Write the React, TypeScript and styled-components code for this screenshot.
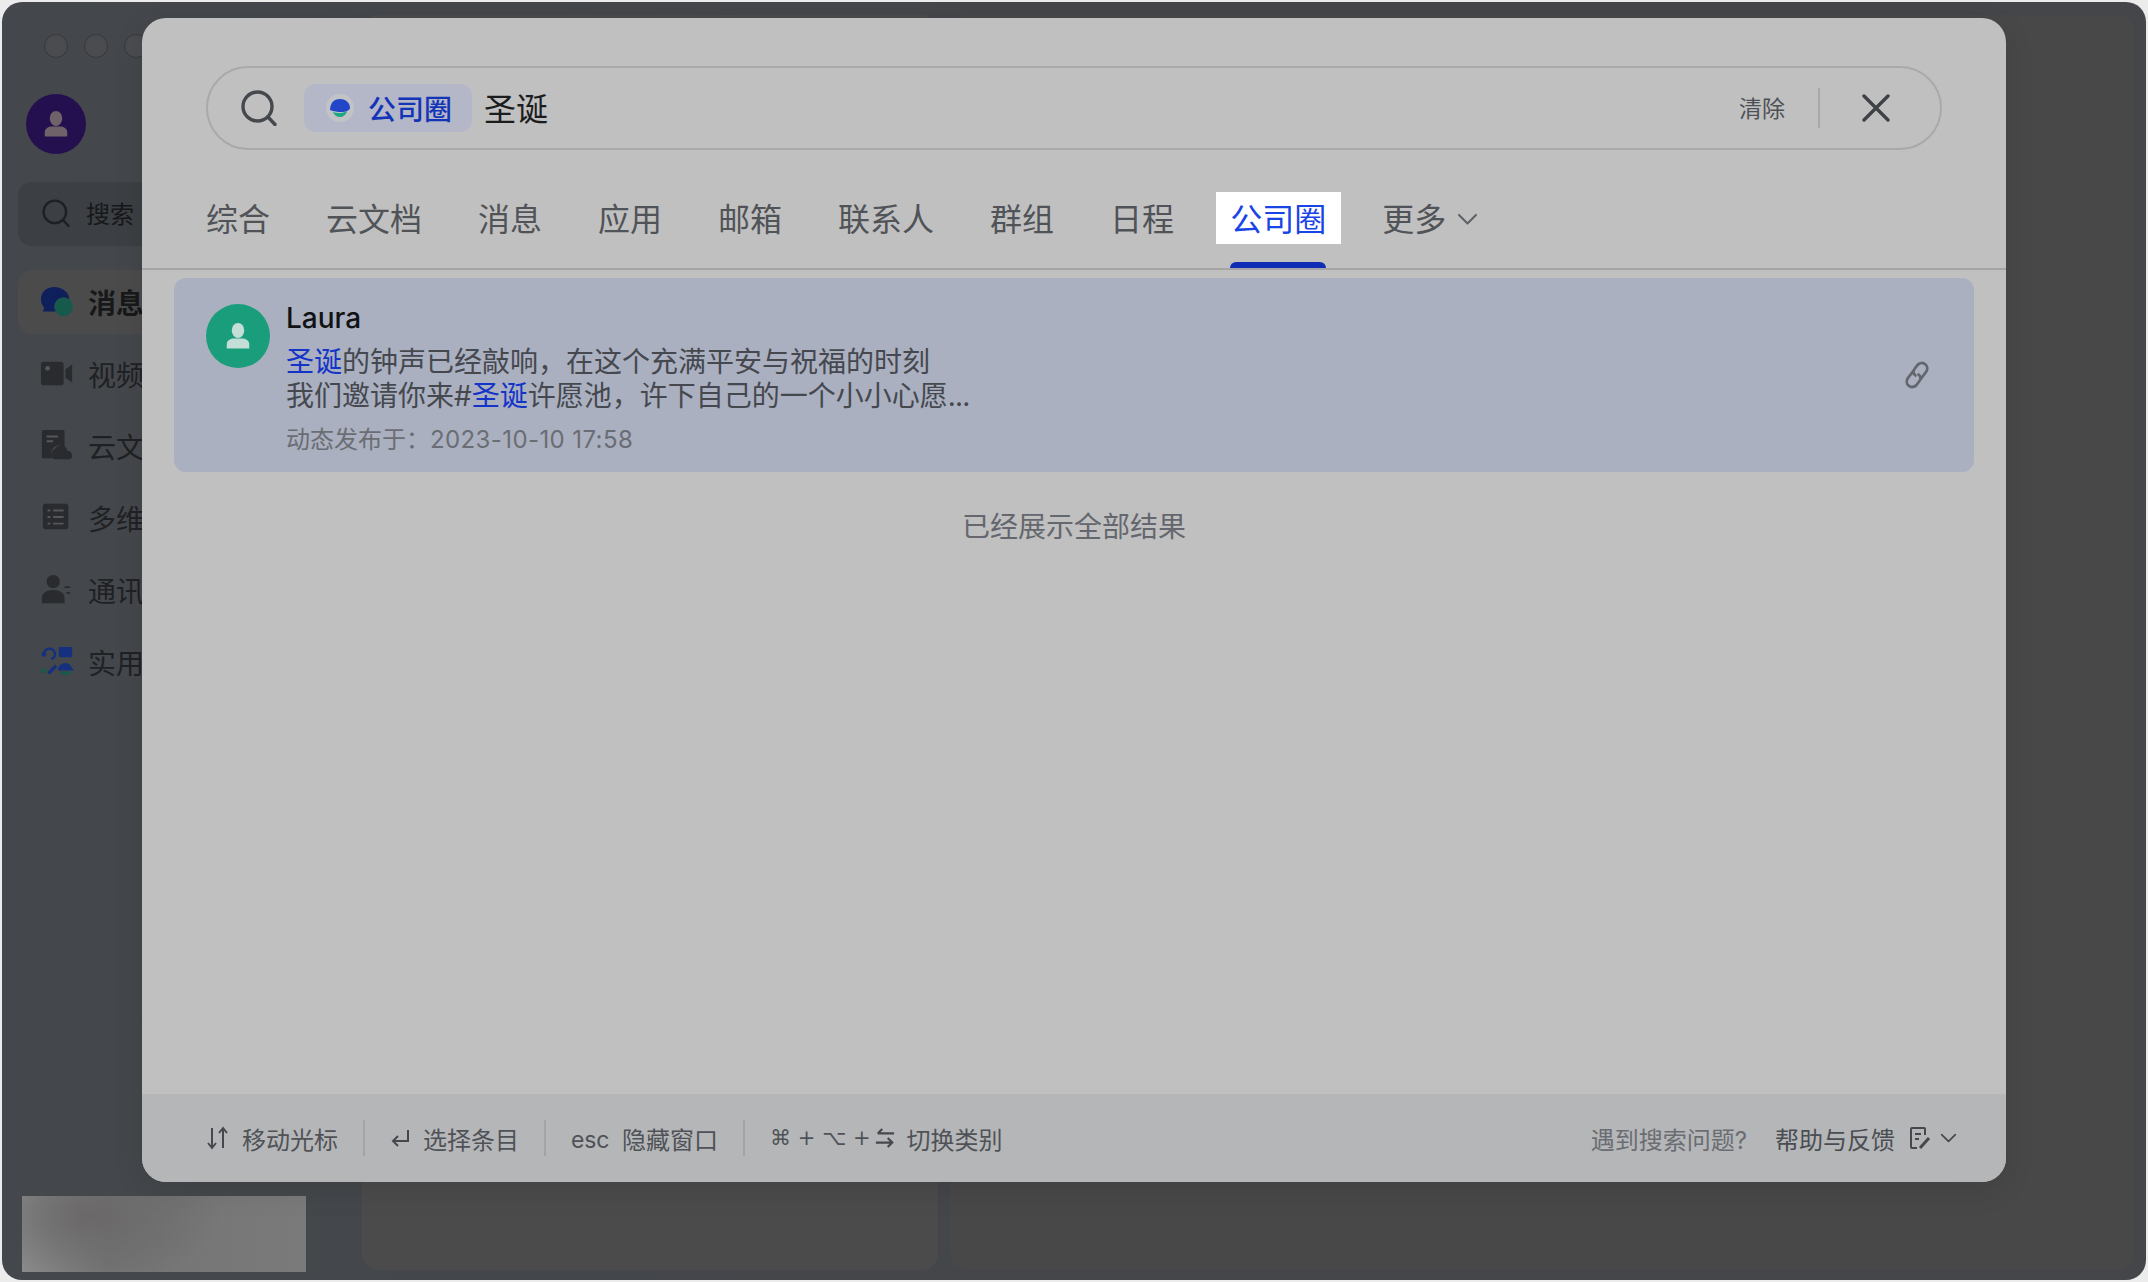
import React from "react";
import styled, { createGlobalStyle } from "styled-components";

const GlobalStyle = createGlobalStyle`
  html, body {
    margin: 0;
    padding: 0;
    background: #ececec;
  }
  * {
    box-sizing: border-box;
  }
  body {
    font-family: Inter, "Noto Sans CJK SC", "Noto Sans", sans-serif;
  }
`;

const Page = styled.div`
  width: 2148px;
  height: 1282px;
  padding: 2px;
  overflow: hidden;
`;

const Window = styled.div`
  position: relative;
  width: 2144px;
  height: 1278px;
  display: flex;
  border-radius: 20px;
  overflow: hidden;
  background: linear-gradient(90deg, #44474b 0%, #44464a 60%, #454649 100%);
`;

const Sidebar = styled.aside`
  width: 360px;
  flex-shrink: 0;
  display: flex;
  flex-direction: column;
  padding: 32px 16px 8px;
`;

const TrafficLights = styled.div`
  display: flex;
  gap: 16px;
  padding-left: 26px;
`;

const Light = styled.span`
  width: 24px;
  height: 24px;
  border-radius: 50%;
  background: #4a4c4f;
  border: 1px solid #36383b;
`;

const UserAvatar = styled.div`
  width: 60px;
  height: 60px;
  margin: 36px 0 28px 8px;
  border-radius: 50%;
  background: #25104f;
  display: flex;
  align-items: center;
  justify-content: center;
`;

const SideSearch = styled.div`
  height: 64px;
  border-radius: 14px;
  background: #3c3f43;
  display: flex;
  align-items: center;
  gap: 16px;
  padding: 0 0 3px 24px;
  font-size: 24px;
  color: #17181a;
  margin-bottom: 24px;
`;

const NavList = styled.nav`
  display: flex;
  flex-direction: column;
  gap: 8px;
`;

const NavItem = styled.div<{ $active?: boolean }>`
  height: 64px;
  border-radius: 14px;
  display: flex;
  align-items: center;
  gap: 14px;
  padding-left: 22px;
  font-size: 28px;
  font-weight: ${(p) => (p.$active ? 700 : 400)};
  color: ${(p) => (p.$active ? "#17181a" : "#202124")};
  background: ${(p) => (p.$active ? "#4b4b4b" : "transparent")};
`;

const NavIcon = styled.svg`
  width: 34px;
  height: 34px;
  flex-shrink: 0;
`;

const Thumbnail = styled.div`
  margin: auto 0 0 4px;
  width: 284px;
  height: 76px;
  background:
    radial-gradient(ellipse 130px 70px at 70px 20px, #6a6869 0%, rgba(106, 104, 105, 0) 100%),
    linear-gradient(90deg, #8d8d8d 0%, #747474 30%, #7a7a7a 100%);
`;

const Main = styled.main`
  flex: 1;
  display: flex;
  gap: 12px;
  padding: 13px 12px 10px 0;
`;

const Panel = styled.div<{ $width?: string }>`
  flex: ${(p) => (p.$width ? `0 0 ${p.$width}` : "1")};
  border-radius: 16px;
  background: ${(p) => (p.$width ? "#4b4b4b" : "#484848")};
`;

const Modal = styled.section`
  position: absolute;
  left: 140px;
  top: 16px;
  width: 1864px;
  height: 1164px;
  display: flex;
  flex-direction: column;
  border-radius: 24px;
  overflow: hidden;
  background: #c0c0c0;
  box-shadow: 0 8px 30px rgba(0, 0, 0, 0.1);
`;

const SearchBar = styled.div`
  height: 84px;
  margin: 48px 64px 0;
  flex-shrink: 0;
  border: 2px solid #a9a9a9;
  border-radius: 42px;
  display: flex;
  align-items: center;
  padding: 0 50px 0 33px;
`;

const ScopeTag = styled.div`
  height: 48px;
  margin-left: 27px;
  padding: 0 20px 0 22px;
  border-radius: 12px;
  background: #b3b7c8;
  display: flex;
  align-items: center;
  gap: 14px;
  font-size: 28px;
  font-weight: 500;
  color: #1434b8;
`;

const Query = styled.span`
  margin: 0 0 2px 12px;
  font-size: 32px;
  color: #1b1c1e;
`;

const ClearButton = styled.span`
  margin: 0 0 2px auto;
  font-size: 23px;
  color: #4d5055;
`;

const BarDivider = styled.span`
  width: 2px;
  height: 40px;
  margin: 0 42px 0 33px;
  background: #a8a8a8;
`;

const Tabs = styled.div`
  margin-top: 42px;
  padding: 0 64px 24px;
  flex-shrink: 0;
  display: flex;
  align-items: center;
  gap: 56px;
  border-bottom: 2px solid #a5a5a5;
`;

const Tab = styled.div<{ $active?: boolean }>`
  position: relative;
  height: 52px;
  line-height: 48px;
  padding-top: 4px;
  font-size: 32px;
  display: flex;
  align-items: center;
  gap: 11px;
  color: ${(p) => (p.$active ? "#1a45e6" : "#505357")};
  ${(p) =>
    p.$active &&
    `
    background: #ffffff;
    padding: 4px 15px 0 14px;
    margin: 0 -15px 0 -14px;
    &::after {
      content: "";
      position: absolute;
      left: 14px;
      right: 15px;
      bottom: -24px;
      height: 6px;
      border-radius: 6px 6px 0 0;
      background: #0f2db5;
    }
  `}
`;

const Results = styled.div`
  flex: 1;
  padding: 8px 32px 0;
  display: flex;
  flex-direction: column;
`;

const ResultCard = styled.article`
  height: 194px;
  border-radius: 12px;
  background: #aab0c0;
  display: flex;
  padding: 26px 44px 0 32px;
`;

const ResultAvatar = styled.div`
  width: 64px;
  height: 64px;
  flex-shrink: 0;
  border-radius: 50%;
  background: #1a9d7b;
  display: flex;
  align-items: center;
  justify-content: center;
`;

const ResultBody = styled.div`
  margin: -3px 0 0 16px;
  flex: 1;
`;

const AuthorName = styled.div`
  font-size: 28px;
  line-height: 34px;
  font-weight: 500;
  color: #111214;
`;

const Snippet = styled.div`
  margin-top: 10px;
  font-size: 28px;
  line-height: 34px;
  color: #45484e;
`;

const Mark = styled.span`
  color: #1434c8;
`;

const Ellipsis = styled.span`
  letter-spacing: -0.8px;
`;

const Published = styled.div`
  margin-top: 11px;
  font-size: 24px;
  line-height: 32px;
  color: #6a6d73;
`;

const PublishedTime = styled.span`
  letter-spacing: 0.4px;
`;

const LinkIcon = styled.svg`
  width: 26px;
  height: 30px;
  align-self: center;
  margin-top: -26px;
  flex-shrink: 0;
`;

const EndNote = styled.div`
  margin-top: 36px;
  text-align: center;
  font-size: 28px;
  line-height: 38px;
  color: #64676d;
`;

const Footer = styled.footer`
  height: 88px;
  flex-shrink: 0;
  background: #b5b6b8;
  display: flex;
  align-items: center;
  padding: 0 49px 0 64px;
  font-size: 24px;
  color: #4f5257;
`;

const Hint = styled.div<{ $gap?: number }>`
  display: flex;
  align-items: center;
  gap: ${(p) => p.$gap ?? 13}px;
`;

const HintDivider = styled.span`
  width: 2px;
  height: 36px;
  margin: 0 25px;
  background: #a3a4a6;
`;

const EscKey = styled.span`
  margin-top: 3px;
  font-size: 23px;
  letter-spacing: -0.2px;
`;

const KeyCombo = styled.span`
  display: flex;
  align-items: center;
  gap: 4px;
  font-family: "DejaVu Sans", sans-serif;
  font-size: 21px;
`;

const Help = styled.div`
  margin-left: auto;
  display: flex;
  align-items: center;
`;

const HelpQuestion = styled.span`
  color: #6a6d72;
  margin-right: 28px;
`;

const HelpLink = styled.span`
  color: #4a4d52;
  margin-right: 14px;
`;

const DocIcon = styled.svg`
  width: 22px;
  height: 24px;
  margin-right: 9px;
`;

const SearchGlyph = ({ size, color, width }: { size: number; color: string; width: number }) => (
  <svg width={size} height={size} viewBox="0 0 36 36" fill="none">
    <circle cx="16.5" cy="16.5" r="14.5" stroke={color} strokeWidth={width} />
    <path d="M27 27l7 7.5" stroke={color} strokeWidth={width} strokeLinecap="round" />
  </svg>
);

const PersonGlyph = ({ color, size }: { color: string; size: number }) => (
  <svg width={size} height={size} viewBox="0 0 24 24" fill={color}>
    <ellipse cx="12" cy="7.5" rx="5" ry="6" />
    <path d="M3 22v-3.5C3 15.5 6 14 9 14h6c3 0 6 1.5 6 4.5V22z" />
  </svg>
);

const Chevron = ({ color, w }: { color: string; w: number }) => (
  <svg width={w} height={w * 0.62} viewBox="0 0 16 10" fill="none">
    <path d="M1.5 1.5L8 8l6.5-6.5" stroke={color} strokeWidth="1.6" strokeLinecap="round" strokeLinejoin="round" />
  </svg>
);

const navItems = [
  {
    label: "消息",
    active: true,
    icon: (
      <>
        <path d="M15 2C7 2 1 7.500 1 15c0 3.500 1.300 6.500 3.500 9L3 28h15c7 0 13-5.500 13-13S23 2 15 2z" fill="#0f1f5c" />
        <circle cx="25" cy="23" r="10" fill="#17594a" />
      </>
    ),
  },
  {
    label: "视频会议",
    icon: (
      <>
        <rect x="1" y="5" width="24" height="25" rx="3" fill="#2a2b2e" />
        <path d="M27 13l7-5v19l-7-5z" fill="#2a2b2e" />
        <circle cx="8" cy="12" r="2.500" fill="#55575a" />
      </>
    ),
  },
  {
    label: "云文档",
    icon: (
      <>
        <path d="M4 1h20a2 2 0 012 2v16a9 9 0 00-13 12H4a2 2 0 01-2-2V3a2 2 0 012-2z" fill="#2a2b2e" />
        <path d="M7 8h12M7 13h7" stroke="#55575a" strokeWidth="2" />
        <path d="M15 32a6 6 0 011-11 7 7 0 0113 2 5 5 0 013 9z" fill="#2a2b2e" />
      </>
    ),
  },
  {
    label: "多维表格",
    icon: (
      <>
        <rect x="3" y="3" width="27" height="27" rx="3" fill="#2a2b2e" />
        <path d="M8 10h3M14 10h11M8 17h3M14 17h11M8 24h3M14 24h11" stroke="#55575a" strokeWidth="2" />
      </>
    ),
  },
  {
    label: "通讯录",
    icon: (
      <>
        <circle cx="14" cy="9" r="7" fill="#2a2b2e" />
        <path d="M2 32v-5c0-6 5-9 12-9s12 3 12 9v5z" fill="#2a2b2e" />
        <path d="M26 15h6M28 21h4" stroke="#2a2b2e" strokeWidth="2" />
      </>
    ),
  },
  {
    label: "实用工具",
    icon: (
      <>
        <path d="M4 10a6 6 0 1112 0c0 3-2 4-4 5" fill="none" stroke="#14307f" strokeWidth="2.500" />
        <circle cx="4" cy="10" r="2.500" fill="#14307f" />
        <rect x="20" y="2" width="14" height="11" rx="1.500" fill="#14307f" />
        <path d="M9 30l8-8" stroke="#14307f" strokeWidth="3.500" />
        <path d="M1 26l2.500 2.500 3.500-3.500" stroke="#17594a" strokeWidth="2.500" fill="none" />
        <path d="M19 27a7.500 7.500 0 0114-4l3 4z" fill="#14307f" />
        <path d="M21 28h12a6.500 6.500 0 01-12 0z" fill="#17594a" />
      </>
    ),
  },
];

const tabs = ["综合", "云文档", "消息", "应用", "邮箱", "联系人", "群组", "日程"];

export default function App() {
  return (
    <Page>
      <GlobalStyle />
      <Window>
        <Sidebar>
          <TrafficLights>
            <Light />
            <Light />
            <Light />
          </TrafficLights>
          <UserAvatar>
            <PersonGlyph color="#6f6268" size={30} />
          </UserAvatar>
          <SideSearch>
            <SearchGlyph size={28} color="#1e1f22" width={3} />
            搜索
          </SideSearch>
          <NavList>
            {navItems.map((item) => (
              <NavItem key={item.label} $active={item.active}>
                <NavIcon viewBox="0 0 36 36">{item.icon}</NavIcon>
                {item.label}
              </NavItem>
            ))}
          </NavList>
          <Thumbnail />
        </Sidebar>
        <Main>
          <Panel $width="576px" />
          <Panel />
        </Main>

        <Modal>
          <SearchBar>
            <SearchGlyph size={36} color="#45484c" width={3.4} />
            <ScopeTag>
              <svg width="28" height="28" viewBox="0 0 28 28">
                <circle cx="14" cy="14" r="14" fill="#c2c3c7" />
                <path d="M4 16C4 8 9 5 14 5c6 0 10 4 10 9 0 1-1 2-3 3-3 1.500-10 1.500-17-1z" fill="#2346c8" />
                <path d="M7 18c4 1.500 10 1.500 14-1-1 4-4 6-7 6s-6-2-7-5z" fill="#1ea884" />
              </svg>
              公司圈
            </ScopeTag>
            <Query>圣诞</Query>
            <ClearButton>清除</ClearButton>
            <BarDivider />
            <svg width="28" height="28" viewBox="0 0 28 28" fill="none">
              <path d="M2 2l24 24M26 2L2 26" stroke="#3e4145" strokeWidth="3.400" strokeLinecap="round" />
            </svg>
          </SearchBar>

          <Tabs>
            {tabs.map((tab) => (
              <Tab key={tab}>{tab}</Tab>
            ))}
            <Tab $active>公司圈</Tab>
            <Tab>
              更多
              <Chevron color="#5f6266" w={21} />
            </Tab>
          </Tabs>

          <Results>
            <ResultCard>
              <ResultAvatar>
                <PersonGlyph color="#c3ded6" size={30} />
              </ResultAvatar>
              <ResultBody>
                <AuthorName>Laura</AuthorName>
                <Snippet>
                  <Mark>圣诞</Mark>的钟声已经敲响，在这个充满平安与祝福的时刻
                  <br />
                  我们邀请你来#<Mark>圣诞</Mark>许愿池，许下自己的一个小小心愿<Ellipsis>...</Ellipsis>
                </Snippet>
                <Published>
                  动态发布于：<PublishedTime>2023-10-10 17:58</PublishedTime>
                </Published>
              </ResultBody>
              <LinkIcon viewBox="0 0 26 30" fill="none">
                <path
                  d="M10 10l-6 8a5.500 5.500 0 008.500 7l3-4c2-2.500 1-5-1-6.500M16 20l6-8a5.500 5.500 0 00-8.500-7l-3 4c-2 2.500-1 5 1 6.500"
                  stroke="#63666c"
                  strokeWidth="2.800"
                  strokeLinecap="round"
                />
              </LinkIcon>
            </ResultCard>
            <EndNote>已经展示全部结果</EndNote>
          </Results>

          <Footer>
            <Hint>
              <svg width="23" height="24" viewBox="0 0 23 24" fill="none" stroke="#45484c" strokeWidth="2">
                <path d="M6 2v19M2 17l4 5 4-5M17 22V3M13 7l4-5 4 5" />
              </svg>
              移动光标
            </Hint>
            <HintDivider />
            <Hint>
              <svg width="20" height="20" viewBox="0 0 20 20" fill="none" stroke="#45484c" strokeWidth="2">
                <path d="M18 2v11H3M8 8l-5 5 5 5" />
              </svg>
              选择条目
            </Hint>
            <HintDivider />
            <Hint>
              <EscKey>esc</EscKey>
              隐藏窗口
            </Hint>
            <HintDivider />
            <Hint $gap={12}>
              <KeyCombo>
                ⌘ + ⌥ +
                <svg width="20" height="24" viewBox="0 0 22 24" fill="none" stroke="#45484c" strokeWidth="2.400">
                  <path d="M21 7H3M8 2L3 7M1 17h18M14 12l5 5-5 5" />
                </svg>
              </KeyCombo>
              切换类别
            </Hint>
            <Help>
              <HelpQuestion>遇到搜索问题?</HelpQuestion>
              <HelpLink>帮助与反馈</HelpLink>
              <DocIcon viewBox="0 0 22 24" fill="none" stroke="#45484c" strokeWidth="2">
                <path d="M16 9V3a1 1 0 00-1-1H3a1 1 0 00-1 1v18a1 1 0 001 1h5M6 8h6M6 13h4" />
                <path d="M11 22l9-10" strokeWidth="3" />
              </DocIcon>
              <Chevron color="#45484c" w={17} />
            </Help>
          </Footer>
        </Modal>
      </Window>
    </Page>
  );
}
